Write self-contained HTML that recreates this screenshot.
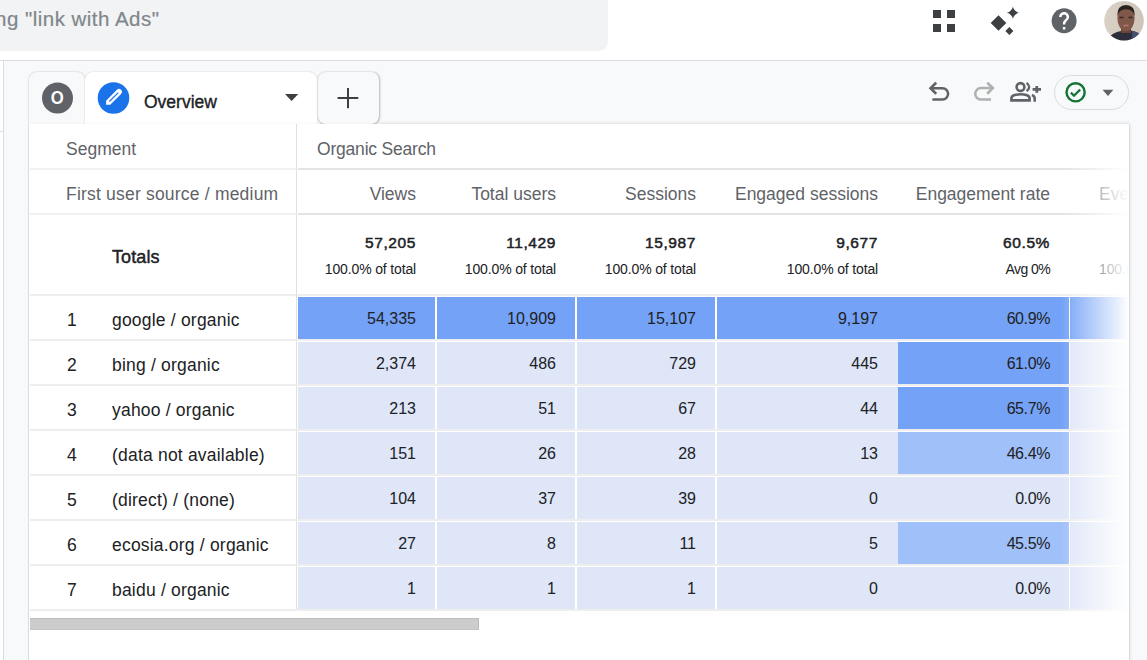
<!DOCTYPE html>
<html><head><meta charset="utf-8"><style>*{box-sizing:border-box;margin:0;padding:0}
html,body{width:1147px;height:660px;overflow:hidden;background:#f8f9fa;font-family:"Liberation Sans",sans-serif;color:#202124;position:relative}
.a{position:absolute}
#top{left:0;top:0;width:1147px;height:61px;background:#fff;border-bottom:1px solid #dadce0}
#search{left:-20px;top:0;width:628px;height:51px;background:#f1f3f4;border-bottom-right-radius:9px}
#stext{left:-5px;top:7px;font-size:20.5px;letter-spacing:0.48px;-webkit-text-stroke:0.2px #80868b;color:#80868b;white-space:nowrap;line-height:24px}
#lstrip{left:0;top:61px;width:4px;height:600px;background:#fff;border-right:1px solid #dadce0}
.tab{top:72px;height:52px;border-top-left-radius:8px;border-top-right-radius:8px}
#card{left:28px;top:124px;width:1102px;height:540px;background:#fff;border-left:1px solid #dcdde0;border-right:1px solid #dcdde0;box-shadow:1px 0 2px rgba(60,64,67,.08)}
.t{position:absolute;white-space:nowrap;line-height:20px}
.r{text-align:right}
.hd{font-size:17.5px;color:#5f6368}
.hline{position:absolute;height:2px;background:#eeeeee}
.cell{position:absolute;height:42px}
.num{font-size:16px;color:#202124}
.dim{font-size:17.5px;color:#202124;letter-spacing:0.2px}
.tot{font-size:18px;color:#202124;-webkit-text-stroke:0.45px #202124}
.totn{font-size:15.5px;color:#202124;-webkit-text-stroke:0.5px #202124;letter-spacing:0.6px}
.tots{font-size:14px;color:#202124;letter-spacing:-0.15px}
.d{background:#74a2f6}
.l{background:#dee6f8}
.m{background:#a0c0f9}
</style></head><body>
<div id="top" class="a"></div>
<div id="search" class="a"></div>
<div id="stext" class="a">ng "link with Ads"</div>
<div id="lstrip" class="a"></div>
<div class="a" style="left:0;top:131px;width:4px;height:1px;background:#dadce0"></div>
<!-- top right icons -->
<svg class="a" style="left:920px;top:0" width="227" height="45" viewBox="920 0 227 45">
  <g fill="#3c4043">
    <rect x="933" y="10" width="8" height="8"/><rect x="947" y="10" width="8" height="8"/>
    <rect x="933" y="24" width="8" height="8"/><rect x="947" y="24" width="8" height="8"/>
    <path d="M998.5 15.2 L1006.3 23 L998.5 30.8 L990.7 23Z"/>
    <path d="M1009.4 27 L1013.4 31 L1009.4 35 L1005.4 31Z"/>
    <path d="M1012.9 6.8 Q1014.2 11.5 1018.9 12.8 Q1014.2 14.1 1012.9 18.8 Q1011.6 14.1 1006.9 12.8 Q1011.6 11.5 1012.9 6.8Z"/>
  </g>
  <circle cx="1064.1" cy="20.75" r="12.5" fill="#5f6368"/>
  <path transform="translate(1049.1 5.75) scale(1.25)" fill="#fff" d="M13 19h-2v-2h2v2zm2.07-7.75l-.9.92C13.45 12.9 13 13.5 13 15h-2v-.5c0-1.1.45-2.1 1.170-2.83l1.24-1.26c.37-.36.59-.86.59-1.41 0-1.1-.9-2-2-2s-2 .9-2 2H8c0-2.21 1.79-4 4-4s4 1.79 4 4c0 .88-.36 1.68-.93 2.25z"/>
  <defs><clipPath id="av"><circle cx="1124" cy="20.8" r="19.8"/></clipPath>
  <linearGradient id="avbg" x1="0" y1="0" x2="1" y2="0"><stop offset="0" stop-color="#dcd3c8"/><stop offset="1" stop-color="#cdc3b8"/></linearGradient></defs>
  <g clip-path="url(#av)">
    <rect x="1100" y="0" width="48" height="45" fill="url(#avbg)"/>
    <path d="M1106 44 Q1108 35 1117 32 L1123 30.5 L1131 30.5 Q1139 32 1142 36 V44Z" fill="#2c2f3b"/>
    <path d="M1131 30.5 Q1139 32 1142 36 V44 H1130 Q1133 38 1132 31Z" fill="#46526f"/>
    <rect x="1121" y="26" width="10" height="7" fill="#6a4536"/>
    <ellipse cx="1126" cy="18.5" rx="8.6" ry="12.6" fill="#80584a"/>
    <path d="M1117.4 16 Q1117 5 1126 5 Q1135 5 1134.8 16 Q1133 9.5 1126 9.2 Q1119 9.5 1117.4 16Z" fill="#2a2420"/>
    <path d="M1119.5 17.5 h4 M1128.5 17.5 h4" stroke="#3a2620" stroke-width="1.4"/>
    <path d="M1123.5 25.5 h5" stroke="#b07a72" stroke-width="1.6"/>
  </g>
</svg>
<!-- tabs -->
<div class="a" style="left:380px;top:120px;width:749px;height:4px;background:linear-gradient(to bottom,rgba(60,64,67,0),rgba(60,64,67,.07))"></div>
<div class="a tab" style="left:29px;width:56px;background:#f8f9fa;border-top-left-radius:8px;border-top-right-radius:8px;box-shadow:0 0 2px rgba(60,64,67,.35)"></div>
<div class="a tab" style="left:85px;width:232px;background:#fff;box-shadow:0 0 1.5px rgba(60,64,67,.3)"></div>
<div class="a" style="left:318px;top:72px;width:61px;height:52px;border-radius:8px;background:#f8f9fa;box-shadow:0.5px 0.5px 2px rgba(60,64,67,.35)"></div>
<svg class="a" style="left:0;top:60px" width="400" height="64" viewBox="0 60 400 64">
  <circle cx="57.5" cy="98" r="15.5" fill="#5f6368"/>
  <text x="0" y="0" transform="translate(57.3 104.2) scale(0.88 1)" font-family="Liberation Sans" font-size="19" font-weight="bold" fill="#fff" text-anchor="middle">O</text>
  <circle cx="113.5" cy="98" r="15.8" fill="#1a73e8"/>
  <g transform="translate(113.9 97) rotate(45)">
    <path d="M-2.9 8.1 V-7.2 A2.9 2.9 0 0 1 2.9 -7.2 V8.1 L0 11 Z" fill="#fff"/>
    <rect x="-0.6" y="-6.2" width="1.2" height="12.6" fill="#1a73e8"/>
  </g>
  <path d="M285 94 L298.3 94 L291.6 101Z" fill="#3c4043"/>
  <rect x="337.6" y="97" width="20.7" height="2" fill="#3c4043"/>
  <rect x="347" y="88" width="2" height="20.2" fill="#3c4043"/>
</svg>
<div class="a" style="left:144px;top:90px;font-size:17.5px;-webkit-text-stroke:0.35px #202124;color:#202124;line-height:24px;white-space:nowrap">Overview</div>
<!-- toolbar -->
<svg class="a" style="left:920px;top:76px" width="80" height="30" viewBox="920 76 80 30">
  <g fill="none" stroke="#5f6368" stroke-width="2.5">
    <path d="M931 88.25 H942.5 A5.6 5.6 0 0 1 942.5 99.45 H932.4"/>
    <path d="M936.2 82.6 L930.6 88.25 L936.2 93.9" stroke-width="2.7"/>
  </g>
  <g fill="none" stroke="#b0b0b0" stroke-width="2.5" transform="translate(1923.4 0) scale(-1 1)">
    <path d="M931 88.1 H942.5 A5.7 5.7 0 0 1 942.5 99.5 H932.4"/>
    <path d="M936.2 82.6 L930.6 88.1 L936.2 93.7" stroke-width="2.7"/>
  </g>
</svg>
<svg class="a" style="left:1005px;top:78px" width="40" height="28" viewBox="1005 78 40 28">
  <g fill="none" stroke="#5f6368">
    <circle cx="1020.5" cy="87" r="3.9" stroke-width="2.6"/>
    <path d="M1026.6 82.8 Q1031.8 87 1026.6 91.2" stroke-width="2.3"/>
    <path d="M1011.4 100.4 V98.6 Q1011.4 96.2 1014 95.3 Q1017 94.3 1020.5 94.3 Q1024 94.3 1027 95.3 Q1029.6 96.2 1029.6 98.6 V100.4 Z" stroke-width="2.6"/>
    <path d="M1032 94.9 Q1034.7 96.3 1034.7 98.6 V101.75" stroke-width="2.5"/>
  </g>
  <rect x="1032.6" y="88" width="8.4" height="2.75" fill="#5f6368"/>
  <rect x="1035.4" y="86" width="2.75" height="6.8" fill="#5f6368"/>
</svg>
<div class="a" style="left:1054px;top:75px;width:75px;height:35px;border:1px solid #dadce0;border-radius:18px"></div>
<svg class="a" style="left:1060px;top:77px" width="60" height="32" viewBox="1060 77 60 32">
  <circle cx="1075.6" cy="92.3" r="9.1" fill="none" stroke="#137333" stroke-width="2.4"/>
  <path d="M1070.9 92.6 L1074 95.7 L1080.2 89.5" fill="none" stroke="#137333" stroke-width="2.3"/>
  <path d="M1102.5 89.8 L1113.4 89.8 L1108 95.9Z" fill="#5f6368"/>
</svg>

<div id="card" class="a">
</div>
<div class="t hd" style="left:66px;top:139px">Segment</div>
<div class="t hd" style="left:317px;top:139px;letter-spacing:-0.2px">Organic Search</div>
<div class="hline" style="left:30px;top:168px;width:266px;background:#f0f0f0"></div>
<div class="hline" style="left:298px;top:168px;width:830px;background:#e3e3e3"></div>
<div class="t hd" style="left:66px;top:184px;letter-spacing:0.2px">First user source / medium</div>
<div class="t hd r" style="right:731px;top:184px">Views</div>
<div class="t hd r" style="right:591px;top:184px">Total users</div>
<div class="t hd r" style="right:451px;top:184px">Sessions</div>
<div class="t hd r" style="right:269px;top:184px">Engaged sessions</div>
<div class="t hd r" style="right:97px;top:184px">Engagement rate</div>
<div class="a" style="left:1070px;top:170px;width:58px;height:120px;overflow:hidden"><div class="t hd" style="left:29px;top:14px">Events</div><div class="t tots" style="left:29px;top:89px">100.0% of total</div></div>
<div class="hline" style="left:30px;top:213px;width:266px;background:#f0f0f0"></div>
<div class="hline" style="left:298px;top:213px;width:830px;background:#e3e3e3"></div>
<div class="t tot" style="left:112px;top:247px;letter-spacing:0.1px">Totals</div>
<div class="t totn r" style="right:731px;top:233px">57,205</div>
<div class="t tots r" style="right:731px;top:259px">100.0% of total</div>
<div class="t totn r" style="right:591px;top:233px">11,429</div>
<div class="t tots r" style="right:591px;top:259px">100.0% of total</div>
<div class="t totn r" style="right:451px;top:233px">15,987</div>
<div class="t tots r" style="right:451px;top:259px">100.0% of total</div>
<div class="t totn r" style="right:269px;top:233px">9,677</div>
<div class="t tots r" style="right:269px;top:259px">100.0% of total</div>
<div class="t totn r" style="right:97px;top:233px">60.5%</div>
<div class="t tots r" style="right:97px;top:259px;letter-spacing:-0.6px">Avg 0%</div>
<div class="hline" style="left:30px;top:294px;width:1098px"></div>
<div class="a" style="left:296px;top:124px;width:1px;height:487px;background:#e0e0e0"></div>
<div class="t dim" style="left:67px;top:310px">1</div>
<div class="t dim" style="left:112px;top:310px">google / organic</div>
<div class="cell d" style="left:298px;top:297px;width:137px"></div>
<div class="t num r" style="right:731px;top:309px">54,335</div>
<div class="cell d" style="left:437px;top:297px;width:138px"></div>
<div class="t num r" style="right:591px;top:309px">10,909</div>
<div class="cell d" style="left:577px;top:297px;width:138px"></div>
<div class="t num r" style="right:451px;top:309px">15,107</div>
<div class="cell d" style="left:717px;top:297px;width:181px"></div>
<div class="t num r" style="right:269px;top:309px">9,197</div>
<div class="cell d" style="left:898px;top:297px;width:171px"></div>
<div class="t num r" style="right:97px;top:309px;letter-spacing:-0.4px">60.9%</div>
<div class="cell d" style="left:1070px;top:297px;width:59px"></div>
<div class="hline" style="left:30px;top:339px;width:1098px"></div>
<div class="t dim" style="left:67px;top:355px">2</div>
<div class="t dim" style="left:112px;top:355px">bing / organic</div>
<div class="cell l" style="left:298px;top:342px;width:137px"></div>
<div class="t num r" style="right:731px;top:354px">2,374</div>
<div class="cell l" style="left:437px;top:342px;width:138px"></div>
<div class="t num r" style="right:591px;top:354px">486</div>
<div class="cell l" style="left:577px;top:342px;width:138px"></div>
<div class="t num r" style="right:451px;top:354px">729</div>
<div class="cell l" style="left:717px;top:342px;width:181px"></div>
<div class="t num r" style="right:269px;top:354px">445</div>
<div class="cell d" style="left:898px;top:342px;width:171px"></div>
<div class="t num r" style="right:97px;top:354px;letter-spacing:-0.4px">61.0%</div>
<div class="cell l" style="left:1070px;top:342px;width:59px"></div>
<div class="hline" style="left:30px;top:384px;width:1098px"></div>
<div class="t dim" style="left:67px;top:400px">3</div>
<div class="t dim" style="left:112px;top:400px">yahoo / organic</div>
<div class="cell l" style="left:298px;top:387px;width:137px"></div>
<div class="t num r" style="right:731px;top:399px">213</div>
<div class="cell l" style="left:437px;top:387px;width:138px"></div>
<div class="t num r" style="right:591px;top:399px">51</div>
<div class="cell l" style="left:577px;top:387px;width:138px"></div>
<div class="t num r" style="right:451px;top:399px">67</div>
<div class="cell l" style="left:717px;top:387px;width:181px"></div>
<div class="t num r" style="right:269px;top:399px">44</div>
<div class="cell d" style="left:898px;top:387px;width:171px"></div>
<div class="t num r" style="right:97px;top:399px;letter-spacing:-0.4px">65.7%</div>
<div class="cell l" style="left:1070px;top:387px;width:59px"></div>
<div class="hline" style="left:30px;top:429px;width:1098px"></div>
<div class="t dim" style="left:67px;top:445px">4</div>
<div class="t dim" style="left:112px;top:445px">(data not available)</div>
<div class="cell l" style="left:298px;top:432px;width:137px"></div>
<div class="t num r" style="right:731px;top:444px">151</div>
<div class="cell l" style="left:437px;top:432px;width:138px"></div>
<div class="t num r" style="right:591px;top:444px">26</div>
<div class="cell l" style="left:577px;top:432px;width:138px"></div>
<div class="t num r" style="right:451px;top:444px">28</div>
<div class="cell l" style="left:717px;top:432px;width:181px"></div>
<div class="t num r" style="right:269px;top:444px">13</div>
<div class="cell m" style="left:898px;top:432px;width:171px"></div>
<div class="t num r" style="right:97px;top:444px;letter-spacing:-0.4px">46.4%</div>
<div class="cell l" style="left:1070px;top:432px;width:59px"></div>
<div class="hline" style="left:30px;top:474px;width:1098px"></div>
<div class="t dim" style="left:67px;top:490px">5</div>
<div class="t dim" style="left:112px;top:490px">(direct) / (none)</div>
<div class="cell l" style="left:298px;top:477px;width:137px"></div>
<div class="t num r" style="right:731px;top:489px">104</div>
<div class="cell l" style="left:437px;top:477px;width:138px"></div>
<div class="t num r" style="right:591px;top:489px">37</div>
<div class="cell l" style="left:577px;top:477px;width:138px"></div>
<div class="t num r" style="right:451px;top:489px">39</div>
<div class="cell l" style="left:717px;top:477px;width:181px"></div>
<div class="t num r" style="right:269px;top:489px">0</div>
<div class="cell l" style="left:898px;top:477px;width:171px"></div>
<div class="t num r" style="right:97px;top:489px;letter-spacing:-0.4px">0.0%</div>
<div class="cell l" style="left:1070px;top:477px;width:59px"></div>
<div class="hline" style="left:30px;top:519px;width:1098px"></div>
<div class="t dim" style="left:67px;top:535px">6</div>
<div class="t dim" style="left:112px;top:535px">ecosia.org / organic</div>
<div class="cell l" style="left:298px;top:522px;width:137px"></div>
<div class="t num r" style="right:731px;top:534px">27</div>
<div class="cell l" style="left:437px;top:522px;width:138px"></div>
<div class="t num r" style="right:591px;top:534px">8</div>
<div class="cell l" style="left:577px;top:522px;width:138px"></div>
<div class="t num r" style="right:451px;top:534px">11</div>
<div class="cell l" style="left:717px;top:522px;width:181px"></div>
<div class="t num r" style="right:269px;top:534px">5</div>
<div class="cell m" style="left:898px;top:522px;width:171px"></div>
<div class="t num r" style="right:97px;top:534px;letter-spacing:-0.4px">45.5%</div>
<div class="cell l" style="left:1070px;top:522px;width:59px"></div>
<div class="hline" style="left:30px;top:564px;width:1098px"></div>
<div class="t dim" style="left:67px;top:580px">7</div>
<div class="t dim" style="left:112px;top:580px">baidu / organic</div>
<div class="cell l" style="left:298px;top:567px;width:137px"></div>
<div class="t num r" style="right:731px;top:579px">1</div>
<div class="cell l" style="left:437px;top:567px;width:138px"></div>
<div class="t num r" style="right:591px;top:579px">1</div>
<div class="cell l" style="left:577px;top:567px;width:138px"></div>
<div class="t num r" style="right:451px;top:579px">1</div>
<div class="cell l" style="left:717px;top:567px;width:181px"></div>
<div class="t num r" style="right:269px;top:579px">0</div>
<div class="cell l" style="left:898px;top:567px;width:171px"></div>
<div class="t num r" style="right:97px;top:579px;letter-spacing:-0.4px">0.0%</div>
<div class="cell l" style="left:1070px;top:567px;width:59px"></div>
<div class="hline" style="left:30px;top:609px;width:1098px"></div>
<div class="a" style="left:1061px;top:160px;width:68px;height:451px;background:linear-gradient(to right,rgba(255,255,255,0),rgba(255,255,255,1))"></div>
<div class="a" style="left:30px;top:618px;width:449px;height:12px;background:#cccccc;border:1px solid #bdbdbd;border-left:0;border-bottom-color:#c4c4c4"></div>
</body></html>
